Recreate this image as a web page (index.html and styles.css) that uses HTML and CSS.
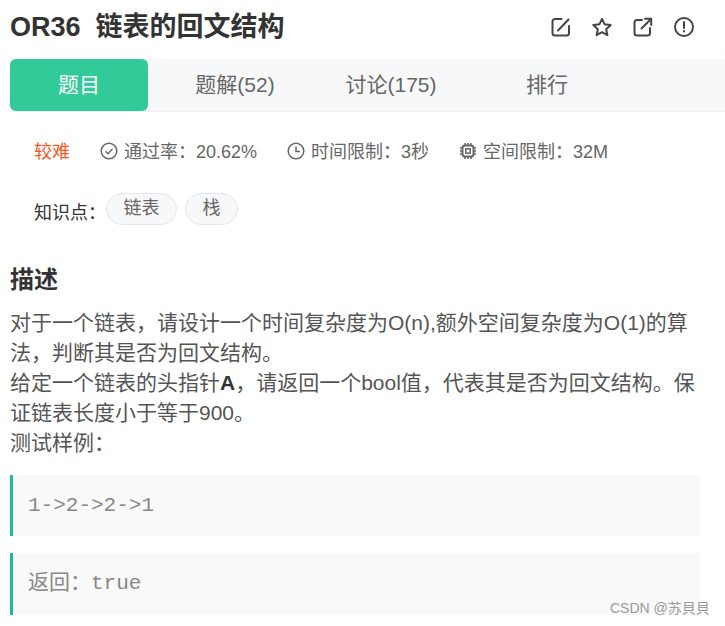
FILE: index.html
```html
<!DOCTYPE html>
<html lang="en">
<head>
    <meta charset="UTF-8">
    <title>OR36 链表的回文结构</title>
    <link rel="stylesheet" href="styles.css">
</head>
<body>
    <div class="page">
        <div class="header">
            <h1>OR36&nbsp; 链表的回文结构</h1>
            <div class="actions">
                <!-- edit -->
                <svg viewBox="0 0 20 20"><path d="M10.500 2H4a2.500 2.500 0 0 0-2.500 2.500V16A2.500 2.500 0 0 0 4 18.500h11.500A2.500 2.500 0 0 0 18 16V9"/><path d="M7 13.500L17.500 2.500"/></svg>
                <!-- star -->
                <svg viewBox="0 0 20 20"><path d="M10 1.800l2.500 5.400 6.200.8-4.500 4.200 1.200 6-5.400-3-5.400 3 1.200-6L1.300 8l6.200-.8z"/></svg>
                <!-- share -->
                <svg viewBox="0 0 20 20"><path d="M9 3H4a2.500 2.500 0 0 0-2.500 2.500V16A2.500 2.500 0 0 0 4 18.500h10.500A2.500 2.500 0 0 0 17 16v-5"/><path d="M8.500 11.500L18 2"/><path d="M12 1.800h6.200V8"/></svg>
                <!-- report -->
                <svg viewBox="0 0 20 20"><circle cx="10" cy="10" r="9"/><path d="M10 5v6"/><path d="M10 14v.6"/></svg>
            </div>
        </div>

        <div class="tabs">
            <a class="tab active">题目</a>
            <a class="tab">题解(52)</a>
            <a class="tab">讨论(175)</a>
            <a class="tab">排行</a>
        </div>

        <div class="stats">
            <span class="level">较难</span>
            <span class="stat">
                <svg viewBox="0 0 18 18"><circle cx="9" cy="9" r="7.800"/><path d="M5.500 9.300l2.500 2.400 4.500-4.700"/></svg>
                通过率：20.62%
            </span>
            <span class="stat">
                <svg viewBox="0 0 18 18"><circle cx="9" cy="9" r="7.800"/><path d="M9 4.500V9.500H13"/></svg>
                时间限制：3秒
            </span>
            <span class="stat">
                <svg viewBox="0 0 18 18"><rect x="3.500" y="3.500" width="11" height="11" rx="2.500" class="chip-body"/><rect x="6.800" y="6.800" width="4.400" height="4.400"/><path d="M6 1v2M9 1v2M12 1v2M6 15v2M9 15v2M12 15v2M1 6h2M1 9h2M1 12h2M15 6h2M15 9h2M15 12h2"/></svg>
                空间限制：32M
            </span>
        </div>

        <div class="tags">
            <span class="tags-label">知识点：</span>
            <span class="tag">链表</span>
            <span class="tag">栈</span>
        </div>

        <h2>描述</h2>
        <p class="desc">对于一个链表，请设计一个时间复杂度为O(n),额外空间复杂度为O(1)的算法，判断其是否为回文结构。<br>给定一个链表的头指针<b>A</b>，请返回一个bool值，代表其是否为回文结构。保证链表长度小于等于900。<br>测试样例：</p>

        <pre class="code">1-&gt;2-&gt;2-&gt;1</pre>
        <pre class="code">返回：true</pre>
    </div>
    <div class="watermark">CSDN @苏貝貝</div>
</body>
</html>
```

FILE: styles.css
```css
* {
    margin: 0;
    padding: 0;
    box-sizing: border-box;
}
body {
    font-family: "Liberation Sans", "Noto Sans CJK SC", sans-serif;
    background: #fff;
    color: #333;
    overflow: hidden;
}
.page {
    height: 626px;
    padding: 0 25px 0 10px;
}
.header {
    display: flex;
    justify-content: space-between;
    align-items: center;
    height: 59px;
    padding-bottom: 6px;
    margin-right: -25px;
    padding-right: 31px;
}
h1 {
    font-size: 27px;
    line-height: 36px;
    color: #333;
}
.actions {
    display: flex;
    gap: 21px;
}
.actions svg {
    width: 20px;
    height: 20px;
    fill: none;
    stroke: #444;
    stroke-width: 2;
    stroke-linecap: round;
    stroke-linejoin: round;
}
.tabs {
    display: flex;
    height: 53px;
    margin-right: -25px;
    background: #f7f8fa;
    border-bottom: 1px solid #eef0f3;
}
.tab {
    width: 156px;
    height: 52px;
    font-size: 21px;
    line-height: 52px;
    text-align: center;
    color: #666;
}
.tab.active {
    width: 138px;
    margin-right: 9px;
    background: #32ca99;
    color: #fff;
    border-radius: 6px;
}
.stats {
    display: flex;
    align-items: center;
    gap: 30px;
    padding: 28px 0 0 24px;
    font-size: 18px;
    line-height: 24px;
    color: #666;
}
.level {
    color: #fa541c;
}
.stat {
    display: flex;
    align-items: center;
    gap: 6px;
}
.stat svg {
    width: 18px;
    height: 18px;
    margin-bottom: 3px;
    fill: none;
    stroke: #666;
    stroke-width: 1.500;
}
.stat svg .chip-body {
    stroke-width: 2;
}
.tags {
    display: flex;
    align-items: center;
    gap: 8px;
    height: 32px;
    margin-top: 29px;
    padding-left: 24px;
    font-size: 18px;
}
.tags-label {
    color: #333;
    margin-top: 3px;
    margin-right: -8px;
}
.tag {
    height: 32px;
    padding: 0 16.500px;
    line-height: 29px;
    color: #666;
    background: #f7f8fa;
    border: 1px solid #e4e6eb;
    border-radius: 16px;
}
h2 {
    margin-top: 39px;
    font-size: 24px;
    line-height: 32px;
    color: #333;
}
.desc {
    margin-top: 12px;
    font-size: 21px;
    line-height: 30px;
    color: #555;
}
.desc b {
    color: #333;
}
.code {
    height: 61px;
    margin-top: 17px;
    padding-left: 15px;
    background: #f9f9f9;
    border-left: 3px solid #1abc9c;
    font-family: "Liberation Mono", "Noto Sans CJK SC", monospace;
    font-size: 21px;
    line-height: 61px;
    color: #888;
}
.code + .code {
    height: 62px;
}
.watermark {
    position: absolute;
    top: 598px;
    left: 610px;
    font-size: 14px;
    line-height: 20px;
    color: #999;
}
```
